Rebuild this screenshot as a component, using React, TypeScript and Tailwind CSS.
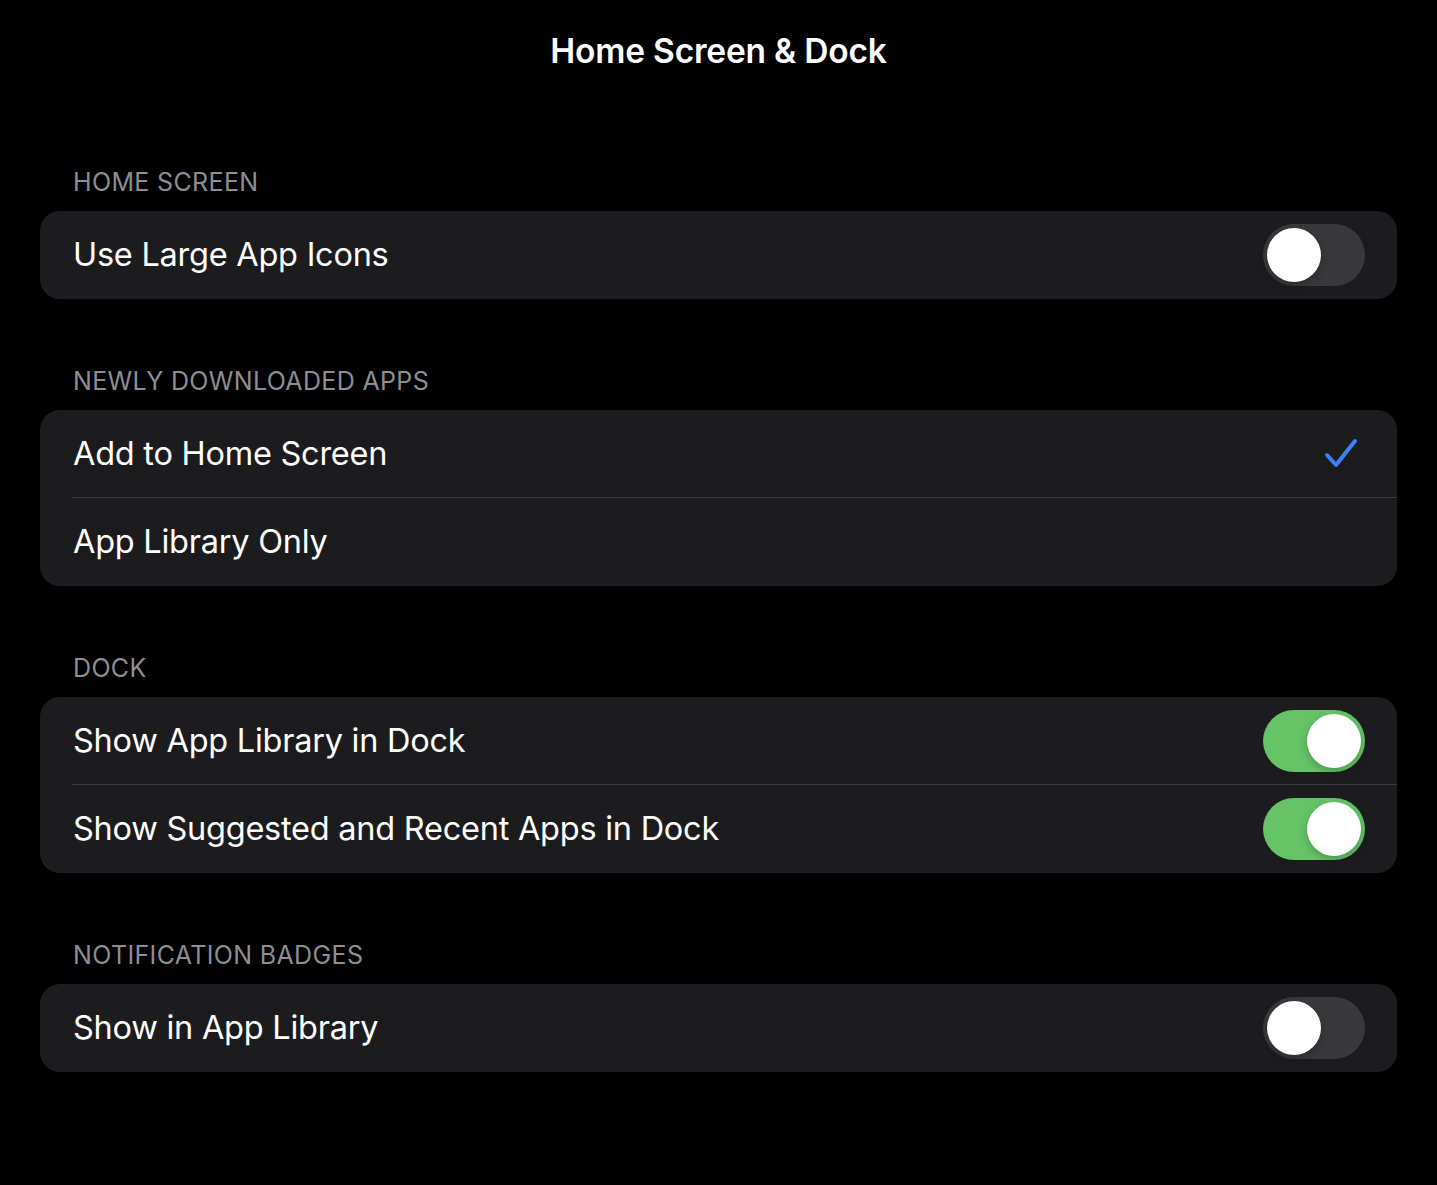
import React from "react";

function Toggle({ on }: { on: boolean }) {
  return (
    <div
      className={
        "relative w-[102px] h-[62px] rounded-full shrink-0 " +
        (on ? "bg-[#65c466]" : "bg-[#39393d]")
      }
    >
      <div
        className={
          "absolute top-[4px] w-[54px] h-[54px] rounded-full bg-white shadow-[0_3px_8px_rgba(0,0,0,0.25)] " +
          (on ? "left-[44px]" : "left-[4px]")
        }
      />
    </div>
  );
}

function Check() {
  return (
    <svg width="36" height="36" viewBox="0 0 36 36" className="mr-[6px]">
      <path
        d="M4 19 L13 29 L32 5"
        fill="none"
        stroke="#3a82f7"
        strokeWidth="4"
        strokeLinecap="round"
        strokeLinejoin="round"
      />
    </svg>
  );
}

function Row({
  label,
  right,
  sep,
}: {
  label: string;
  right?: React.ReactNode;
  sep?: boolean;
}) {
  return (
    <div className="relative h-[88px] flex items-center pl-[33px] pr-[32px]">
      <span className="flex-1 pt-[1px] text-[32.5px] text-white tracking-[-0.25px]">{label}</span>
      {right}
      {sep && (
        <div className="absolute left-[32px] right-0 bottom-0 h-px bg-[#3a3a3e]" />
      )}
    </div>
  );
}

function Section({ title, children }: { title: string; children: React.ReactNode }) {
  return (
    <div className="flex flex-col">
      <div className="pl-[33px] h-[58px] flex items-start pt-[11px] text-[25px] text-[#8d8d93] tracking-[0.35px]">
        {title}
      </div>
      <div className="rounded-[20px] bg-[#1c1c1e] overflow-hidden">{children}</div>
    </div>
  );
}

export default function App() {
  return (
    <div
      className="w-[1437px] h-[1185px] bg-black px-[40px] flex flex-col"
      style={{ fontFamily: "Inter, 'Noto Sans', sans-serif" }}
    >
      <div className="h-[101px] flex items-center justify-center pt-[1px] text-white text-[33.5px] font-semibold tracking-[-0.2px]">
        Home Screen &amp; Dock
      </div>
      <div className="flex flex-col gap-[53px] mt-[52px]">
        <Section title="HOME SCREEN">
          <Row label="Use Large App Icons" right={<Toggle on={false} />} />
        </Section>
        <Section title="NEWLY DOWNLOADED APPS">
          <Row label="Add to Home Screen" right={<Check />} sep />
          <Row label="App Library Only" />
        </Section>
        <Section title="DOCK">
          <Row label="Show App Library in Dock" right={<Toggle on />} sep />
          <Row label="Show Suggested and Recent Apps in Dock" right={<Toggle on />} />
        </Section>
        <Section title="NOTIFICATION BADGES">
          <Row label="Show in App Library" right={<Toggle on={false} />} />
        </Section>
      </div>
    </div>
  );
}
